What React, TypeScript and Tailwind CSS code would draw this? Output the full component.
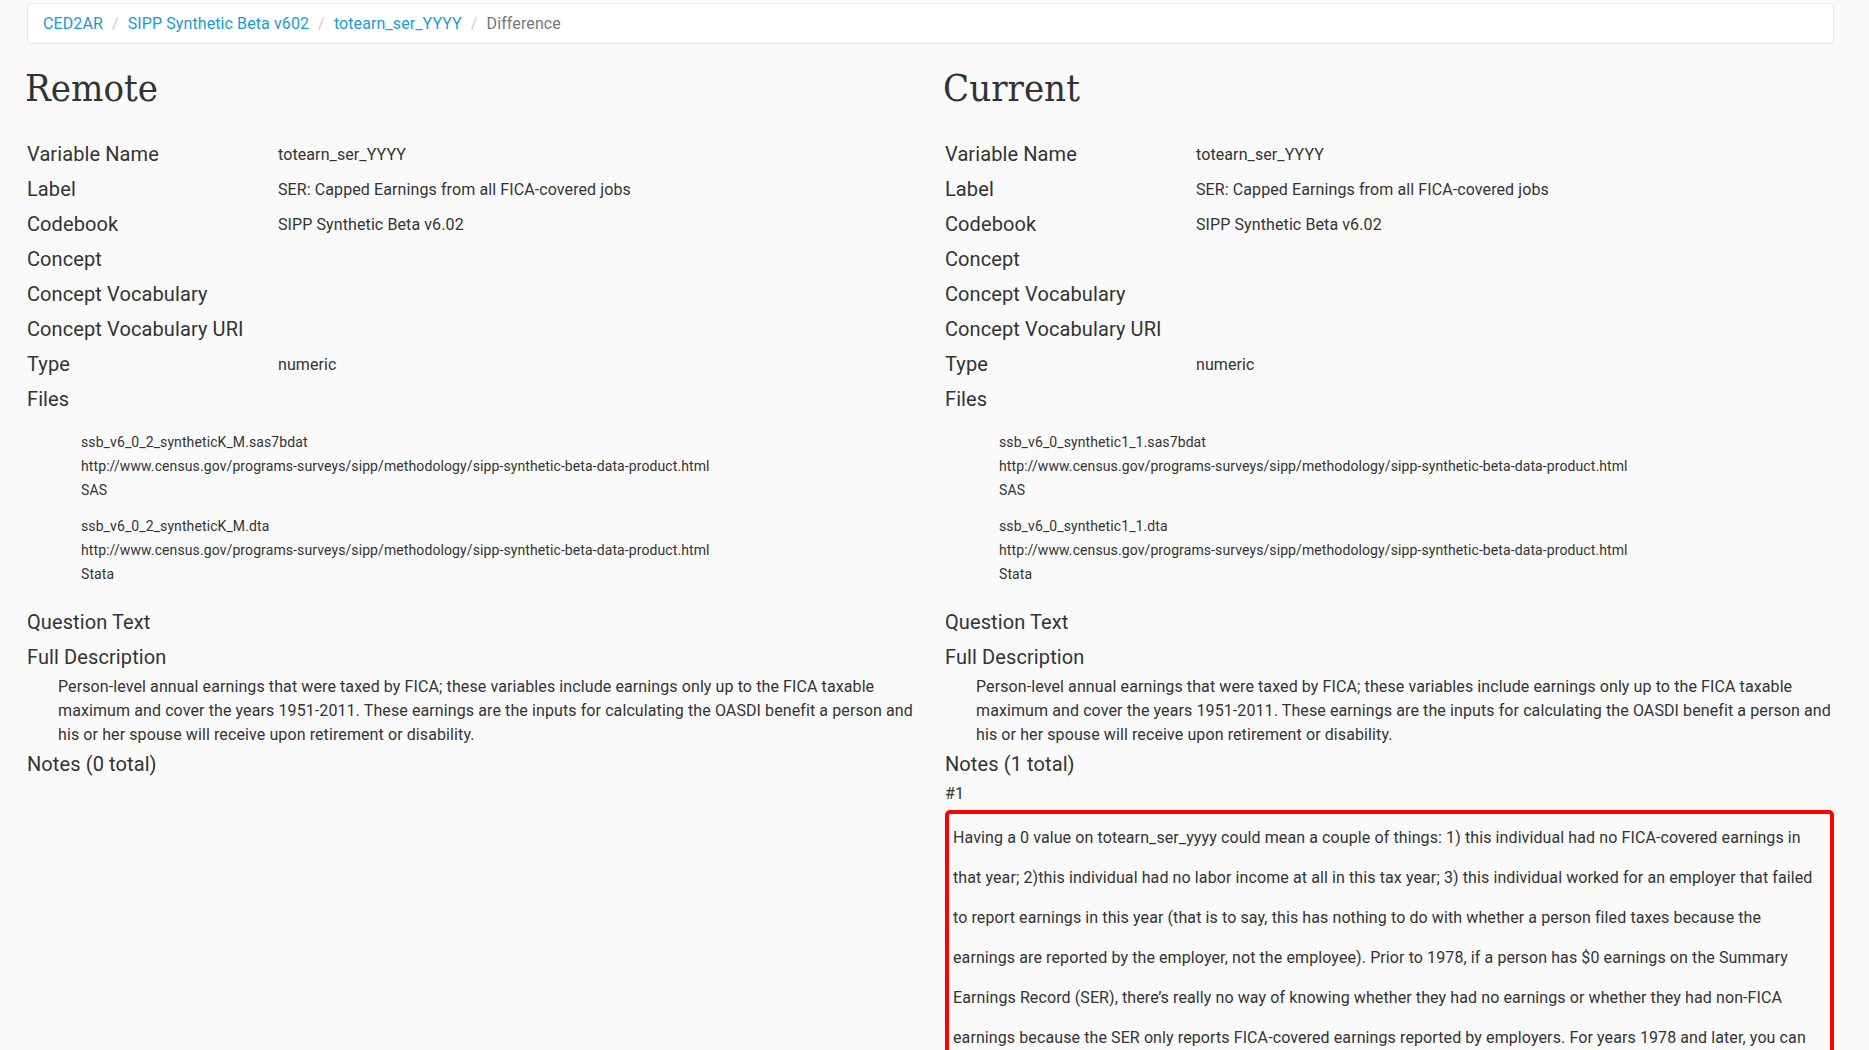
import React from "react";

type Row = { label: string; value?: string };

const FILES_LEFT = [
  ["ssb_v6_0_2_syntheticK_M.sas7bdat", "http://www.census.gov/programs-surveys/sipp/methodology/sipp-synthetic-beta-data-product.html", "SAS"],
  ["ssb_v6_0_2_syntheticK_M.dta", "http://www.census.gov/programs-surveys/sipp/methodology/sipp-synthetic-beta-data-product.html", "Stata"],
];
const FILES_RIGHT = [
  ["ssb_v6_0_synthetic1_1.sas7bdat", "http://www.census.gov/programs-surveys/sipp/methodology/sipp-synthetic-beta-data-product.html", "SAS"],
  ["ssb_v6_0_synthetic1_1.dta", "http://www.census.gov/programs-surveys/sipp/methodology/sipp-synthetic-beta-data-product.html", "Stata"],
];

const ROWS: Row[] = [
  { label: "Variable Name", value: "totearn_ser_YYYY" },
  { label: "Label", value: "SER: Capped Earnings from all FICA-covered jobs" },
  { label: "Codebook", value: "SIPP Synthetic Beta v6.02" },
  { label: "Concept" },
  { label: "Concept Vocabulary" },
  { label: "Concept Vocabulary URI" },
  { label: "Type", value: "numeric" },
  { label: "Files" },
];

const DESC =
  "Person-level annual earnings that were taxed by FICA; these variables include earnings only up to the FICA taxable maximum and cover the years 1951-2011. These earnings are the inputs for calculating the OASDI benefit a person and his or her spouse will receive upon retirement or disability.";

const NOTE =
  "Having a 0 value on totearn_ser_yyyy could mean a couple of things: 1) this individual had no FICA-covered earnings in that year; 2)this individual had no labor income at all in this tax year; 3) this individual worked for an employer that failed to report earnings in this year (that is to say, this has nothing to do with whether a person filed taxes because the earnings are reported by the employer, not the employee). Prior to 1978, if a person has $0 earnings on the Summary Earnings Record (SER), there\u2019s really no way of knowing whether they had no earnings or whether they had non-FICA earnings because the SER only reports FICA-covered earnings reported by employers. For years 1978 and later, you can use the Detailed Earnings Record (DER) variables to determine whether a person had any non-FICA-covered earnings in that year.";

function Column({
  title,
  files,
  notes,
}: {
  title: string;
  files: string[][];
  notes: number;
}) {
  return (
    <div className="min-w-0">
      <h1
        className="mt-[22px] h-[44px] text-[38px] leading-[44px] text-[#333] ml-[-2px] tracking-normal"
        style={{ fontFamily: "'DejaVu Serif Condensed', 'DejaVu Serif', serif", fontStretch: "condensed" }}
      >
        {title}
      </h1>
      <div className="mt-[27px]">
        {ROWS.map((r) => (
          <div key={r.label} className="grid grid-cols-[251px_1fr] h-[35px] items-center">
            <div className="text-[20px] leading-[35px] text-[#333]">{r.label}</div>
            <div className="text-[16px] leading-[35px] text-[#333]">{r.value ?? ""}</div>
          </div>
        ))}
      </div>
      <div className="mt-[13px] mb-[19px] pl-[54px] flex flex-col gap-[12px]">
        {files.map((f) => (
          <div key={f[0]} className="text-[14px] leading-[24px] text-[#333]">
            <div>{f[0]}</div>
            <div>{f[1]}</div>
            <div>{f[2]}</div>
          </div>
        ))}
      </div>
      <div className="text-[20px] leading-[35px] text-[#333]">Question Text</div>
      <div className="text-[20px] leading-[35px] text-[#333]">Full Description</div>
      <p className="pl-[31px] text-[16px] leading-[24px] text-[#333]">{DESC}</p>
      <div className="text-[20px] leading-[35px] text-[#333]">Notes ({notes} total)</div>
      {notes > 0 && (
        <div>
          <div className="text-[16px] leading-[24px] text-[#333]">#1</div>
          <div className="mt-[4px] border-4 border-[#ff0000] rounded-[5px] p-[4px]">
            <p className="text-[16px] leading-[40px] text-[#333]">{NOTE}</p>
          </div>
        </div>
      )}
    </div>
  );
}

export default function App() {
  return (
    <div
      className="min-h-screen bg-[#fafafa] pl-[27px] pr-[35px] pt-[3px] pb-10 tracking-[0.1px]"
      style={{ fontFamily: "Roboto, 'Noto Sans', sans-serif" }}
    >
      <nav className="h-[41px] flex items-center bg-white border border-[#e9e9e9] rounded-[4px] px-[15px] text-[16px]">
        <a className="text-[#1a9ad6]">CED2AR</a>
        <span className="ml-[4px] px-[5px] text-[#cccccc]">/{"\u00a0"}</span>
        <a className="text-[#1a9ad6]">SIPP Synthetic Beta v602</a>
        <span className="ml-[4px] px-[5px] text-[#cccccc]">/{"\u00a0"}</span>
        <a className="text-[#1a9ad6]">totearn_ser_YYYY</a>
        <span className="ml-[4px] px-[5px] text-[#cccccc]">/{"\u00a0"}</span>
        <span className="text-[#777777]">Difference</span>
      </nav>
      <div className="grid grid-cols-2 gap-x-[29px]">
        <Column title="Remote" files={FILES_LEFT} notes={0} />
        <Column title="Current" files={FILES_RIGHT} notes={1} />
      </div>
    </div>
  );
}
